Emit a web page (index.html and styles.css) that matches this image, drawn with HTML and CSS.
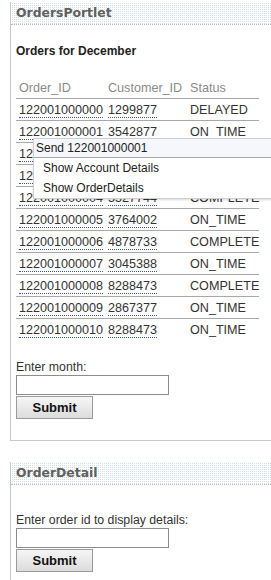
FILE: index.html
```html
<!DOCTYPE html>
<html lang="en">
<head>
  <meta charset="UTF-8">
  <title>Orders</title>
  <link rel="stylesheet" href="styles.css">
</head>
<body>
  <div class="portlet">
    <div class="portlet-title">OrdersPortlet</div>
    <div class="portlet-body">
      <h3 class="caption">Orders for December</h3>
      <table class="orders">
        <thead>
          <tr><th>Order_ID</th><th>Customer_ID</th><th>Status</th></tr>
        </thead>
        <tbody>
          <tr><td><span class="link">122001000000</span></td><td><span class="link">1299877</span></td><td>DELAYED</td></tr>
          <tr><td><span class="link">122001000001</span></td><td><span class="link">3542877</span></td><td>ON_TIME</td></tr>
          <tr><td><span class="link">122001000002</span></td><td><span class="link">4478733</span></td><td>ON_TIME</td></tr>
          <tr><td><span class="link">122001000003</span></td><td><span class="link">2867377</span></td><td>DELAYED</td></tr>
          <tr><td><span class="link">122001000004</span></td><td><span class="link">5527744</span></td><td>COMPLETE</td></tr>
          <tr><td><span class="link">122001000005</span></td><td><span class="link">3764002</span></td><td>ON_TIME</td></tr>
          <tr><td><span class="link">122001000006</span></td><td><span class="link">4878733</span></td><td>COMPLETE</td></tr>
          <tr><td><span class="link">122001000007</span></td><td><span class="link">3045388</span></td><td>ON_TIME</td></tr>
          <tr><td><span class="link">122001000008</span></td><td><span class="link">8288473</span></td><td>COMPLETE</td></tr>
          <tr><td><span class="link">122001000009</span></td><td><span class="link">2867377</span></td><td>ON_TIME</td></tr>
          <tr><td><span class="link">122001000010</span></td><td><span class="link">8288473</span></td><td>ON_TIME</td></tr>
        </tbody>
      </table>

      <form class="form">
        <label class="form-label">Enter month:</label>
        <input class="form-input" type="text">
        <button class="form-button" type="button">Submit</button>
      </form>
    </div>
  </div>

  <!-- popup menu opened on order 122001000001 -->
  <div class="popup-menu">
    <div class="popup-head">Send 122001000001</div>
    <div class="popup-item">Show Account Details</div>
    <div class="popup-item">Show OrderDetails</div>
  </div>

  <div class="portlet portlet-detail">
    <div class="portlet-title">OrderDetail</div>
    <div class="portlet-body">
      <form class="form form-detail">
        <label class="form-label">Enter order id to display details:</label>
        <input class="form-input" type="text">
        <button class="form-button" type="button">Submit</button>
      </form>
    </div>
  </div>
</body>
</html>
```

FILE: styles.css
```css
/* Portal page with two portlets */
html, body {
  overflow: hidden;
}
body {
  margin: 0;
  padding: 2px 0 0 10px;
  font-family: "Liberation Sans", Arial, sans-serif;
  font-size: 12px;
  color: #333333;
  background-color: #ffffff;
  position: relative;
}
.portlet {
  width: 300px;
  border-left: 1px solid #c8c8c8;
  border-bottom: 1px solid #c8c8c8;
}
.portlet-detail {
  margin-top: 21px;
}
.portlet-title {
  height: 22px;
  line-height: 21px;
  padding-left: 5px;
  font-family: "DejaVu Sans", Verdana, sans-serif;
  font-size: 12.4px;
  font-weight: bold;
  color: #606060;
  background-color: #ffffff;
  background-image: linear-gradient(90deg, #ffffff 1px, transparent 1px),
                    linear-gradient(#ffffff 1px, #cfe2e9 1px);
  background-size: 2px 2px;
  border-bottom: 1px dotted #b8b8b8;
}
.portlet-body {
  padding: 0 0 21px 5px;
}
.caption {
  margin: 19px 0 0 0;
  font-size: 12px;
  line-height: 14px;
  font-weight: bold;
  color: #222222;
}
.orders {
  margin-top: 19px;
  border-collapse: collapse;
  table-layout: fixed;
  width: 243px;
  font-size: 12.6px;
}
.orders th {
  text-align: left;
  font-weight: normal;
  color: #8a8a8a;
  height: 21px;
  padding: 0 0 0 3px;
  border-bottom: 1px solid #a8a8a8;
}
.orders td {
  height: 21px;
  padding: 0 0 0 3px;
  white-space: nowrap;
  border-bottom: 1px solid #a8a8a8;
}
.orders tbody tr:last-child td {
  border-bottom: none;
}
.orders th:nth-child(1) {
  width: 87px;
}
.orders th:nth-child(2) {
  width: 78px;
}
.orders th:nth-child(2), .orders td:nth-child(2) {
  padding-left: 2px;
}
.orders th:nth-child(3), .orders td:nth-child(3) {
  padding-left: 4px;
}
.link {
  border-bottom: 1px dotted #3a5a98;
}
.form {
  margin-top: 20px;
}
.form-detail {
  margin-top: 28px;
}
.form-label {
  display: block;
  font-size: 12.3px;
  line-height: 14px;
  color: #333333;
}
.form-input {
  display: block;
  box-sizing: border-box;
  width: 153px;
  height: 20px;
  margin: 1px 0 0 0;
  border: 1px solid #8c8c8c;
  padding: 0;
}
.form-button {
  display: block;
  box-sizing: border-box;
  width: 77px;
  height: 23px;
  margin-top: 1px;
  font-family: "Liberation Sans", Arial, sans-serif;
  font-size: 13px;
  font-weight: bold;
  color: #111111;
  background: linear-gradient(#f6f6f6, #dcdcdc);
  border: 1px solid #9a9a9a;
  border-radius: 0;
}
.popup-menu {
  position: absolute;
  left: 33px;
  top: 138px;
  width: 260px;
  background-color: #ffffff;
  border: 1px solid #cfcfcf;
  box-shadow: 0 1px 2px rgba(0, 0, 0, 0.15);
}
.popup-head {
  height: 18px;
  line-height: 18px;
  padding-left: 2px;
  background-color: #f5f7fc;
  border-bottom: 1px solid #a8a8a8;
  color: #222222;
}
.popup-item {
  height: 20px;
  line-height: 21px;
  padding-left: 9px;
  color: #222222;
}
```
